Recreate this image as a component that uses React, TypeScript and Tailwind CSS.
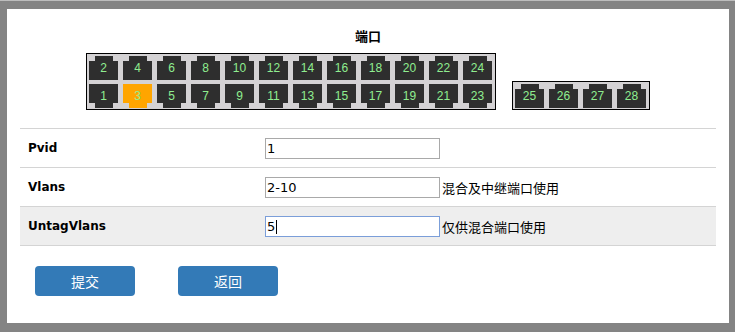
import React from "react";

function Port({ n, flip, active }: { n: number; flip?: boolean; active?: boolean }) {
  const c = active ? "bg-[#ffa500]" : "bg-[#2e2e2e]";
  return (
    <div className="relative flex h-[24px] w-[29px] flex-col items-center">
      {!flip && <div className={`h-[5px] w-[18px] ${c}`} />}
      <div className={`h-[19px] w-full ${c}`} />
      {flip && <div className={`h-[5px] w-[18px] ${c}`} />}
      <span className="absolute inset-0 flex items-center justify-center font-['Liberation_Sans',sans-serif] text-[12px] leading-none text-[#90ee90]">
        {n}
      </span>
    </div>
  );
}

const top = [2, 4, 6, 8, 10, 12, 14, 16, 18, 20, 22, 24];
const bottom = [1, 3, 5, 7, 9, 11, 13, 15, 17, 19, 21, 23];
const sfp = [25, 26, 27, 28];

function Row({
  label,
  value,
  note,
  shaded,
  focused,
}: {
  label: string;
  value: string;
  note?: string;
  shaded?: boolean;
  focused?: boolean;
}) {
  return (
    <div
      className={`flex h-[39px] items-center border-t border-[#d4d4d4] ${shaded ? "bg-[#eeeeee]" : "bg-white"}`}
    >
      <div className="w-[245px] pl-[8px] font-['DejaVu_Sans',sans-serif] text-[12px] font-bold text-black">
        {label}
      </div>
      <div className="relative">
        <input
          readOnly
          defaultValue={value}
          className={`block h-[21px] w-[175px] border bg-white pl-[1px] font-['DejaVu_Sans',sans-serif] text-[13px] text-black outline-none ${focused ? "border-[#7b9ed9]" : "border-[#a9a9a9]"}`}
        />
        {focused && (
          <span className="absolute left-[11px] top-[4px] h-[14px] w-[1px] bg-black" />
        )}
      </div>
      {note && (
        <span className="pl-[2px] font-['Noto_Sans_CJK_SC',sans-serif] text-[13px] leading-none text-black">
          {note}
        </span>
      )}
    </div>
  );
}

export default function App() {
  return (
    <div className="h-[332px] w-[735px] border-t border-[#bdbdbd] bg-[#848484] pb-[9px] pl-[7px] pr-[6px] pt-[8px]">
      <div className="flex h-full w-full flex-col bg-white px-[13px] pt-[19px]">
        <div className="h-[16px] text-center font-['Noto_Sans_CJK_SC',sans-serif] text-[13px] font-bold leading-[16px] text-black">
          端口
        </div>
        <div className="mt-[9px] flex items-end justify-center gap-[16px]">
          <div className="border border-black bg-[#d4d2d4] pb-[1px] pl-[2px] pr-[3px] pt-[2px]">
            <div className="flex gap-[5px]">
              {top.map((n) => (
                <Port key={n} n={n} />
              ))}
            </div>
            <div className="mt-[4px] flex gap-[5px]">
              {bottom.map((n) => (
                <Port key={n} n={n} flip active={n === 3} />
              ))}
            </div>
          </div>
          <div className="border border-black bg-[#d4d2d4] pb-[1px] pl-[2px] pr-[3px] pt-[2px]">
            <div className="flex gap-[5px]">
              {sfp.map((n) => (
                <Port key={n} n={n} />
              ))}
            </div>
          </div>
        </div>
        <div className="mt-[18px] border-b border-[#d4d4d4]">
          <Row label="Pvid" value="1" />
          <Row label="Vlans" value="2-10" note="混合及中继端口使用" />
          <Row label="UntagVlans" value="5" note="仅供混合端口使用" shaded focused />
        </div>
        <div className="mt-[20px] flex gap-[43px] pl-[15px]">
          <button className="h-[30px] w-[100px] rounded-[4px] bg-[#337ab7] font-['Noto_Sans_CJK_SC',sans-serif] text-[14px] text-white">
            提交
          </button>
          <button className="h-[30px] w-[100px] rounded-[4px] bg-[#337ab7] font-['Noto_Sans_CJK_SC',sans-serif] text-[14px] text-white">
            返回
          </button>
        </div>
      </div>
    </div>
  );
}
